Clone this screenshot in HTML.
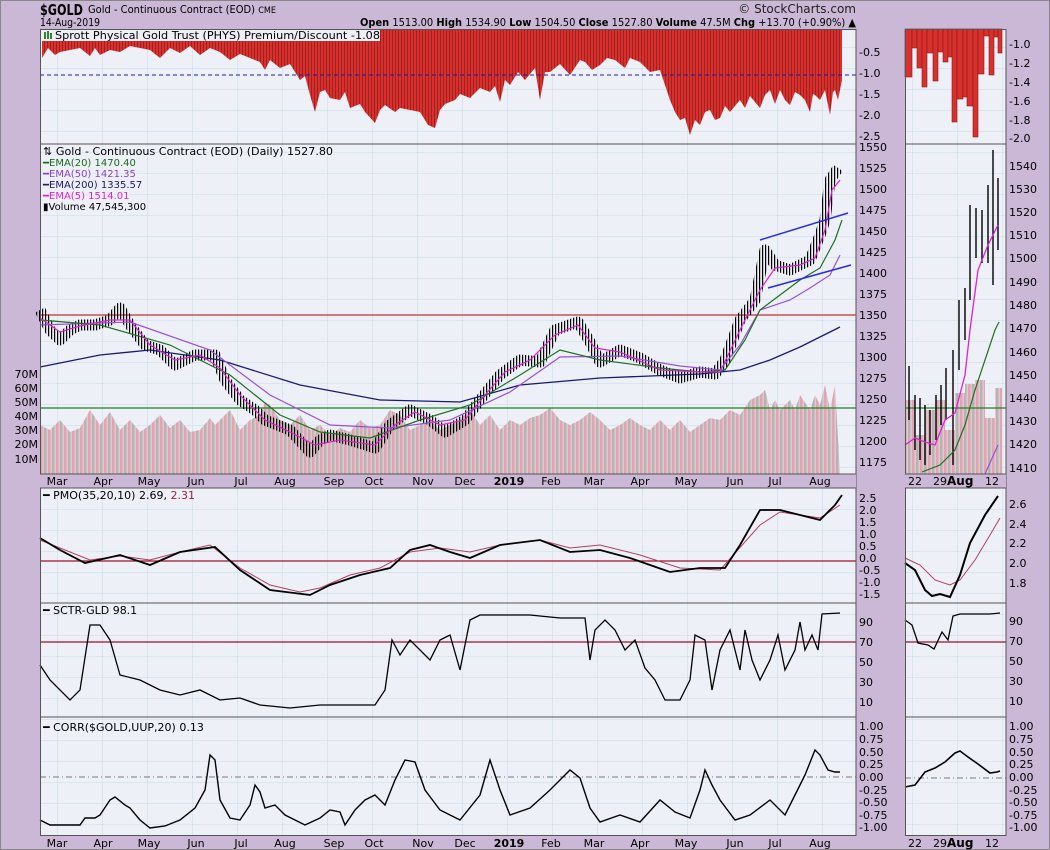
<!DOCTYPE html>
<html><head><meta charset="utf-8"><style>
html,body{margin:0;padding:0;background:#cbb8d6;}
svg{display:block;font-family:"DejaVu Sans","Liberation Sans",sans-serif;}
</style></head><body>
<svg width="1050" height="850" viewBox="0 0 1050 850" xmlns="http://www.w3.org/2000/svg">
<defs>
<pattern id="vg" width="8" height="10" patternUnits="userSpaceOnUse">
<rect width="8" height="10" fill="#e8c4cc"/>
<rect x="0" width="2.5" height="10" fill="#d9a8b3"/>
<rect x="4" width="2.5" height="10" fill="#b4b4b4"/>
</pattern>
<pattern id="vt" width="3" height="10" patternUnits="userSpaceOnUse">
<rect width="1.2" height="10" fill="#000"/>
</pattern>
<pattern id="gridm" width="45" height="21" patternUnits="userSpaceOnUse" x="12" y="5">
<rect width="45" height="21" fill="#eef0f8"/>
<path d="M0 0H45M0 0V21" stroke="#c4dde6" stroke-width="1"/>
</pattern>
<pattern id="rb" width="3" height="10" patternUnits="userSpaceOnUse">
<rect width="3" height="10" fill="#d8302c"/>
<rect x="2.3" width="0.7" height="10" fill="#8a1a1a"/>
</pattern>
</defs>
<rect width="1050" height="850" fill="#cbb8d6"/>
<rect x="0.5" y="0.5" width="1049" height="849" fill="none" stroke="#888"/>

<text x="40" y="15" font-size="15" font-weight="bold" fill="#000" textLength="43" lengthAdjust="spacingAndGlyphs">$GOLD</text>
<text x="88" y="13" font-size="11" fill="#000" textLength="188" lengthAdjust="spacingAndGlyphs">Gold - Continuous Contract (EOD) <tspan font-size="9">CME</tspan></text>
<text x="40" y="26" font-size="11" fill="#000" textLength="60" lengthAdjust="spacingAndGlyphs">14-Aug-2019</text>
<text x="360" y="26" font-size="11" fill="#000" textLength="496" lengthAdjust="spacingAndGlyphs"><tspan font-weight="bold">Open</tspan> 1513.00 <tspan font-weight="bold">High</tspan> 1534.90 <tspan font-weight="bold">Low</tspan> 1504.50 <tspan font-weight="bold">Close</tspan> 1527.80 <tspan font-weight="bold">Volume</tspan> 47.5M <tspan font-weight="bold">Chg</tspan> +13.70 (+0.90%) ▲</text>
<text x="856" y="13" font-size="12" fill="#222" text-anchor="end">© StockCharts.com</text>

<rect x="40" y="29" width="816" height="807" fill="url(#gridm)"/>
<rect x="905" y="29" width="101" height="807" fill="url(#gridm)"/>

<polygon fill="url(#rb)" points="42,29 42,58 48,48 55,55 60,52 70,50 80,48 90,56 95,48 100,55 110,50 120,52 130,46 150,50 160,58 170,48 180,53 190,46 200,55 210,48 220,52 230,60 240,54 250,58 260,62 265,70 270,60 280,68 290,64 300,80 305,76 310,95 315,112 320,92 325,90 330,98 340,100 345,92 350,108 360,104 365,112 375,123 380,110 385,105 395,112 400,108 410,110 420,112 428,125 435,128 440,110 445,104 455,100 460,94 470,98 480,88 490,92 495,86 500,102 505,80 510,85 518,72 525,80 535,68 540,100 545,72 550,72 560,64 570,75 580,60 585,62 592,70 600,65 607,58 615,60 625,68 630,58 640,62 650,72 660,70 665,85 670,100 675,112 680,120 685,118 690,135 695,120 700,125 705,112 710,110 715,120 720,118 725,106 730,112 740,100 745,108 750,96 760,108 765,95 770,90 775,104 780,90 785,100 790,105 795,92 800,95 805,100 810,112 813,94 815,95 820,100 825,90 830,115 833,92 835,90 838,100 842,80 842,29"/>
<line x1="40" y1="75" x2="856" y2="75" stroke="#1a1ab0" stroke-dasharray="4,3"/>
<line x1="40" y1="144" x2="856" y2="144" stroke="#555"/>
<rect x="41" y="29" width="339" height="12" fill="#eef0f8"/>
<rect x="44" y="32" width="2" height="7" fill="#2a8a2a"/><rect x="47" y="31" width="2" height="8" fill="#2a8a2a"/><rect x="50" y="33" width="2" height="6" fill="#2a8a2a"/>
<text x="55" y="39" font-size="11" fill="#000" textLength="325" lengthAdjust="spacingAndGlyphs">Sprott Physical Gold Trust (PHYS) Premium/Discount -1.08</text>
<g font-size="11" fill="#000"><text x="859" y="56">-0.5</text><text x="859" y="77">-1.0</text><text x="859" y="98">-1.5</text><text x="859" y="119">-2.0</text><text x="859" y="140">-2.5</text></g>
<g fill="#d8302c" stroke="#8a1a1a" stroke-width="0.6">
<rect x="905" y="29" width="7" height="48"/><rect x="912" y="29" width="5" height="19"/><rect x="917" y="29" width="5" height="39"/><rect x="922" y="29" width="5" height="58"/><rect x="927" y="29" width="6" height="24"/><rect x="933" y="29" width="5" height="52"/><rect x="938" y="29" width="5" height="23"/><rect x="943" y="29" width="5" height="33"/><rect x="948" y="29" width="4" height="28"/><rect x="952" y="29" width="5" height="93"/><rect x="957" y="29" width="6" height="70"/><rect x="963" y="29" width="4" height="68"/><rect x="967" y="29" width="6" height="77"/><rect x="973" y="29" width="5" height="108"/><rect x="978" y="29" width="6" height="45"/><rect x="984" y="29" width="5" height="7"/><rect x="989" y="29" width="5" height="46"/><rect x="994" y="29" width="4" height="8"/><rect x="998" y="29" width="4" height="24"/>
</g>
<line x1="905" y1="144" x2="1006" y2="144" stroke="#555"/>
<g font-size="11" fill="#000"><text x="1009" y="48">-1.0</text><text x="1009" y="67">-1.2</text><text x="1009" y="86">-1.4</text><text x="1009" y="105">-1.6</text><text x="1009" y="124">-1.8</text><text x="1009" y="142">-2.0</text></g>

<polygon fill="url(#vg)" points="40,474 40,425 50,430 60,420 70,432 80,428 90,410 100,425 110,412 120,430 130,420 140,432 150,425 160,415 170,428 180,420 190,432 200,430 210,418 215,425 230,410 240,430 250,420 260,415 265,402 270,405 280,420 290,425 300,415 310,430 320,425 330,435 340,428 350,432 360,420 370,428 380,425 390,410 400,415 410,430 420,425 430,420 440,430 450,425 460,420 470,410 480,425 490,415 500,430 510,420 520,425 530,418 540,415 550,408 560,420 570,425 580,420 590,412 600,420 610,430 620,425 630,418 640,425 650,430 660,420 670,430 680,420 690,432 700,425 710,418 720,420 730,410 740,415 750,400 760,395 765,390 770,410 775,400 780,410 790,400 795,410 800,395 810,410 815,395 820,405 825,385 830,410 835,385 840,474"/>
<line x1="40" y1="315" x2="856" y2="315" stroke="#c03030" stroke-width="1.2"/>
<line x1="40" y1="408" x2="856" y2="408" stroke="#208020" stroke-width="1.2"/>
<polyline fill="none" stroke="url(#vt)" stroke-width="11" stroke-linejoin="round" points="40,310 50,330 60,340 70,330 80,325 95,325 110,320 120,308 130,325 145,345 160,350 175,365 195,355 215,355 225,380 240,400 255,410 265,420 290,430 310,452 320,440 330,435 350,440 375,448 390,425 410,410 430,420 445,432 465,420 480,400 500,375 520,360 540,362 555,330 578,322 590,342 600,362 620,350 640,358 660,370 680,378 700,372 715,374 725,360 740,320 755,300 765,250 775,265 790,270 810,260 820,235 825,220 830,180 838,168"/>
<polyline fill="none" stroke="#1a1a6e" stroke-width="1.3" points="40,367 100,355 150,350 220,360 300,385 380,400 460,402 520,385 600,378 700,374 740,370 770,360 800,347 840,327"/>
<polyline fill="none" stroke="#9a50d8" stroke-width="1.2" points="40,325 130,322 210,350 270,395 330,425 390,428 450,420 510,392 560,357 620,356 680,366 720,370 740,345 760,310 790,300 810,288 830,275 840,255"/>
<polyline fill="none" stroke="#207020" stroke-width="1.2" points="40,320 100,325 170,345 230,375 280,415 320,432 370,438 420,420 470,405 520,375 560,350 600,360 660,368 700,372 725,370 745,340 760,310 780,295 800,280 820,268 835,240 842,220"/>
<polyline fill="none" stroke="#e020d0" stroke-width="1.2" points="40,318 60,332 80,326 110,320 130,320 150,345 175,360 200,355 220,368 240,395 265,420 290,432 315,445 340,440 375,445 395,425 415,412 440,425 465,420 485,395 505,372 530,360 555,335 578,325 595,348 620,352 660,370 700,372 720,372 740,330 760,290 775,268 800,265 815,258 825,230 832,190 840,180"/>
<line x1="760" y1="240" x2="848" y2="213" stroke="#2a2ae0" stroke-width="1.5"/>
<line x1="768" y1="288" x2="851" y2="265" stroke="#2a2ae0" stroke-width="1.5"/>
<line x1="40" y1="474" x2="856" y2="474" stroke="#555"/>
<g font-size="11" style="paint-order:stroke" stroke="#eef0f8" stroke-width="3">
<text x="43" y="155" fill="#000" textLength="290" lengthAdjust="spacingAndGlyphs">⇅ Gold - Continuous Contract (EOD) (Daily) 1527.80</text>
<text x="43" y="166" font-size="10" fill="#1a6a1a">━EMA(20) 1470.40</text>
<text x="43" y="177" font-size="10" fill="#8a40c8">━EMA(50) 1421.35</text>
<text x="43" y="188" font-size="10" fill="#1a1a6e">━EMA(200) 1335.57</text>
<text x="43" y="199" font-size="10" fill="#e020d0">━EMA(5) 1514.01</text>
<text x="43" y="210" font-size="10" fill="#000">▮Volume 47,545,300</text>
</g>
<g font-size="11" fill="#000">
<text x="859" y="151">1550</text><text x="859" y="172">1525</text><text x="859" y="193">1500</text><text x="859" y="214">1475</text><text x="859" y="235">1450</text><text x="859" y="256">1425</text><text x="859" y="277">1400</text><text x="859" y="298">1375</text><text x="859" y="319">1350</text><text x="859" y="340">1325</text><text x="859" y="361">1300</text><text x="859" y="382">1275</text><text x="859" y="403">1250</text><text x="859" y="424">1225</text><text x="859" y="445">1200</text><text x="859" y="466">1175</text>
</g>
<g font-size="11" fill="#000" text-anchor="end">
<text x="38" y="378">70M</text><text x="38" y="392">60M</text><text x="38" y="406">50M</text><text x="38" y="420">40M</text><text x="38" y="434">30M</text><text x="38" y="448">20M</text><text x="38" y="463">10M</text>
</g>
<polygon fill="url(#vg)" points="905,474 905,400 915,400 915,435 925,435 925,410 935,410 935,400 945,400 945,430 955,430 955,393 965,393 965,384 975,384 975,380 985,380 985,418 995,418 995,388 1002,388 1002,474"/>
<line x1="905" y1="408" x2="1006" y2="408" stroke="#208020" stroke-width="1.2"/>
<g stroke="#000" stroke-width="1.4">
<line x1="909" y1="366" x2="909" y2="420"/><line x1="915" y1="395" x2="915" y2="450"/><line x1="920" y1="398" x2="920" y2="460"/><line x1="925" y1="405" x2="925" y2="465"/><line x1="930" y1="410" x2="930" y2="455"/><line x1="936" y1="395" x2="936" y2="440"/><line x1="941" y1="385" x2="941" y2="425"/><line x1="946" y1="368" x2="946" y2="420"/><line x1="953" y1="350" x2="953" y2="465"/><line x1="959" y1="300" x2="959" y2="370"/><line x1="965" y1="288" x2="965" y2="340"/><line x1="970" y1="205" x2="970" y2="300"/><line x1="976" y1="208" x2="976" y2="258"/><line x1="982" y1="210" x2="982" y2="263"/><line x1="988" y1="185" x2="988" y2="263"/><line x1="993" y1="150" x2="993" y2="285"/><line x1="998" y1="178" x2="998" y2="250"/>
</g>
<polyline fill="none" stroke="#207020" stroke-width="1.2" points="922,472 940,465 955,450 965,425 975,390 985,360 995,330 999,322"/>
<polyline fill="none" stroke="#e020d0" stroke-width="1.3" points="905,445 915,438 925,442 935,445 945,420 955,413 965,375 970,330 978,270 988,245 998,225"/>
<polyline fill="none" stroke="#9a50d8" stroke-width="1.2" points="985,474 998,445"/>
<line x1="905" y1="474" x2="1006" y2="474" stroke="#555"/>
<g font-size="11" fill="#000">
<text x="1009" y="170">1540</text><text x="1009" y="193">1530</text><text x="1009" y="216">1520</text><text x="1009" y="239">1510</text><text x="1009" y="262">1500</text><text x="1009" y="286">1490</text><text x="1009" y="309">1480</text><text x="1009" y="332">1470</text><text x="1009" y="356">1460</text><text x="1009" y="379">1450</text><text x="1009" y="402">1440</text><text x="1009" y="425">1430</text><text x="1009" y="448">1420</text><text x="1009" y="472">1410</text>
</g>

<line x1="40" y1="488" x2="856" y2="488" stroke="#555"/>
<line x1="905" y1="488" x2="1006" y2="488" stroke="#555"/>
<text x="43" y="499" font-size="11" fill="#000">━ PMO(35,20,10) 2.69, <tspan fill="#a02040">2.31</tspan></text>
<line x1="40" y1="561" x2="856" y2="561" stroke="#a01030" stroke-width="1.3"/>
<polyline fill="none" stroke="#b04060" stroke-width="1" points="40,540 60,548 90,560 120,556 150,560 180,552 210,545 240,568 270,585 300,592 320,588 350,575 380,568 410,552 440,548 470,552 500,545 540,540 570,548 600,545 640,555 680,568 720,570 760,525 780,512 800,515 820,518 840,505"/>
<polyline fill="none" stroke="#000" stroke-width="1.8" points="40,538 60,550 85,563 120,555 150,565 180,552 215,547 240,570 270,590 310,595 330,585 360,575 390,568 410,550 430,545 450,552 470,558 500,545 540,540 570,552 600,550 630,558 650,565 670,572 700,568 725,568 740,545 760,510 780,510 800,515 820,520 835,505 842,495"/>
<g font-size="11" fill="#000"><text x="859" y="502">2.5</text><text x="859" y="514">2.0</text><text x="859" y="526">1.5</text><text x="859" y="538">1.0</text><text x="859" y="550">0.5</text><text x="859" y="562">0.0</text><text x="859" y="574">-0.5</text><text x="859" y="586">-1.0</text><text x="859" y="598">-1.5</text></g>
<polyline fill="none" stroke="#b04060" stroke-width="1" points="905,558 920,565 935,580 950,585 960,580 975,560 990,535 1000,518"/>
<polyline fill="none" stroke="#000" stroke-width="2" points="905,563 915,570 925,590 932,596 940,594 950,597 960,575 970,543 985,515 998,496"/>
<g font-size="11" fill="#000"><text x="1009" y="508">2.6</text><text x="1009" y="528">2.4</text><text x="1009" y="547">2.2</text><text x="1009" y="567">2.0</text><text x="1009" y="587">1.8</text></g>

<line x1="40" y1="603" x2="856" y2="603" stroke="#555"/>
<line x1="905" y1="603" x2="1006" y2="603" stroke="#555"/>
<text x="43" y="614" font-size="11" fill="#000">━ SCTR-GLD 98.1</text>
<line x1="40" y1="642" x2="856" y2="642" stroke="#a01030" stroke-width="1.3"/>
<polyline fill="none" stroke="#000" stroke-width="1.3" points="40,665 50,680 60,690 70,700 80,690 90,625 100,625 110,640 120,675 140,680 160,690 180,695 200,690 220,700 240,698 260,705 290,708 320,705 350,705 375,705 385,690 392,640 400,655 410,640 420,650 430,660 440,640 450,635 460,670 470,620 480,615 500,615 530,615 560,618 585,618 590,660 595,630 605,620 615,630 625,650 635,640 645,668 655,680 665,700 680,700 690,680 695,635 705,640 712,690 720,650 730,630 740,670 745,630 752,660 760,680 770,660 778,635 785,670 795,650 800,622 805,650 812,635 818,650 822,614 840,613"/>
<g font-size="11" fill="#000"><text x="859" y="626">90</text><text x="859" y="646">70</text><text x="859" y="666">50</text><text x="859" y="686">30</text><text x="859" y="706">10</text></g>
<line x1="905" y1="642" x2="1006" y2="642" stroke="#a01030" stroke-width="1.3"/>
<polyline fill="none" stroke="#000" stroke-width="1.3" points="905,620 912,625 918,643 928,645 934,649 942,632 948,640 953,616 960,614 975,614 990,614 1000,613"/>
<g font-size="11" fill="#000"><text x="1009" y="625">90</text><text x="1009" y="645">70</text><text x="1009" y="665">50</text><text x="1009" y="685">30</text><text x="1009" y="705">10</text></g>

<line x1="40" y1="717" x2="856" y2="717" stroke="#555"/>
<line x1="905" y1="717" x2="1006" y2="717" stroke="#555"/>
<text x="43" y="731" font-size="11" fill="#000">━ CORR($GOLD,UUP,20) 0.13</text>
<line x1="40" y1="777" x2="856" y2="777" stroke="#777" stroke-dasharray="6,3,1,3"/>
<polyline fill="none" stroke="#000" stroke-width="1.4" points="40,820 50,825 80,825 85,818 95,818 100,815 110,800 115,797 125,805 130,808 140,820 150,828 165,826 180,820 195,808 205,790 210,755 215,760 220,800 230,818 240,820 250,805 255,785 260,792 265,808 275,805 285,815 295,820 305,825 320,818 330,810 340,812 345,825 355,810 365,800 375,795 385,805 395,780 405,760 415,762 425,790 440,810 460,820 480,795 490,760 500,790 510,815 530,808 550,790 570,770 580,778 590,808 600,822 620,815 640,822 660,800 675,812 690,818 700,790 705,770 712,785 720,800 735,820 750,815 770,800 785,815 795,795 805,775 815,750 820,755 828,770 835,772 840,772"/>
<g font-size="11" fill="#000"><text x="859" y="730">1.00</text><text x="859" y="743">0.75</text><text x="859" y="756">0.50</text><text x="859" y="768">0.25</text><text x="859" y="781">0.00</text><text x="859" y="794">-0.25</text><text x="859" y="806">-0.50</text><text x="859" y="819">-0.75</text><text x="859" y="831">-1.00</text></g>
<line x1="905" y1="778" x2="1006" y2="778" stroke="#777" stroke-dasharray="6,3,1,3"/>
<polyline fill="none" stroke="#000" stroke-width="1.6" points="905,787 915,785 925,772 935,768 945,762 955,753 960,751 968,757 978,764 990,773 997,772 1000,771"/>
<g font-size="11" fill="#000"><text x="1009" y="730">1.00</text><text x="1009" y="743">0.75</text><text x="1009" y="756">0.50</text><text x="1009" y="768">0.25</text><text x="1009" y="781">0.00</text><text x="1009" y="794">-0.25</text><text x="1009" y="806">-0.50</text><text x="1009" y="819">-0.75</text><text x="1009" y="831">-1.00</text></g>

<rect x="40.5" y="29.5" width="815.5" height="806" fill="none" stroke="#555"/>
<rect x="905.5" y="29.5" width="100.5" height="806" fill="none" stroke="#555"/>
<rect x="40" y="474.5" width="816" height="13" fill="#cbb8d6"/>
<rect x="905" y="474.5" width="101" height="13" fill="#cbb8d6"/>
<g font-size="11" fill="#000" text-anchor="middle">
<text x="57" y="485">Mar</text><text x="103" y="485">Apr</text><text x="149" y="485">May</text><text x="196" y="485">Jun</text><text x="241" y="485">Jul</text><text x="285" y="485">Aug</text><text x="334" y="485">Sep</text><text x="374" y="485">Oct</text><text x="423" y="485">Nov</text><text x="465" y="485">Dec</text><text x="509" y="485" font-weight="bold">2019</text><text x="551" y="485">Feb</text><text x="594" y="485">Mar</text><text x="640" y="485">Apr</text><text x="686" y="485">May</text><text x="735" y="485">Jun</text><text x="775" y="485">Jul</text><text x="820" y="485">Aug</text>
</g>
<g font-size="11" fill="#000"><text x="908" y="485">22</text><text x="933" y="485">29<tspan font-weight="bold" font-size="12">Aug</tspan></text><text x="985" y="485">12</text></g>
<g font-size="11" fill="#000" text-anchor="middle">
<text x="57" y="847">Mar</text><text x="103" y="847">Apr</text><text x="149" y="847">May</text><text x="196" y="847">Jun</text><text x="241" y="847">Jul</text><text x="285" y="847">Aug</text><text x="334" y="847">Sep</text><text x="374" y="847">Oct</text><text x="423" y="847">Nov</text><text x="465" y="847">Dec</text><text x="509" y="847" font-weight="bold">2019</text><text x="551" y="847">Feb</text><text x="594" y="847">Mar</text><text x="640" y="847">Apr</text><text x="686" y="847">May</text><text x="735" y="847">Jun</text><text x="775" y="847">Jul</text><text x="820" y="847">Aug</text>
</g>
<g font-size="11" fill="#000"><text x="908" y="847">22</text><text x="933" y="847">29<tspan font-weight="bold" font-size="12">Aug</tspan></text><text x="985" y="847">12</text></g>
</svg>
</body></html>
